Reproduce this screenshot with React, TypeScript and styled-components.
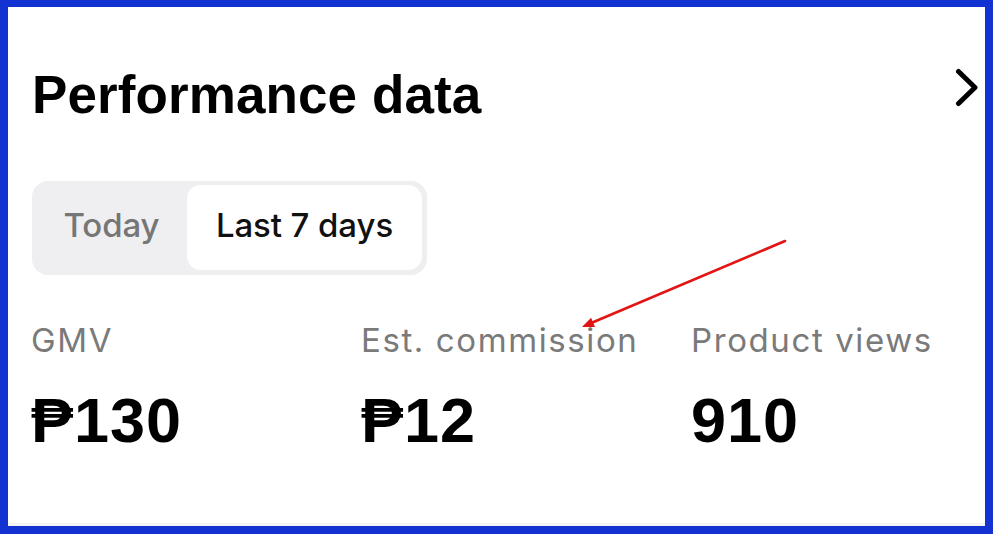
import React from "react";
import styled, { createGlobalStyle } from "styled-components";

const Global = createGlobalStyle`
  html, body { margin: 0; padding: 0; background: #ffffff; }
  * { box-sizing: border-box; }
`;

const Frame = styled.div`
  position: relative;
  width: 993px;
  height: 534px;
  border-style: solid;
  border-color: #1233d1;
  border-width: 7px 8px 8px 8px;
  background: #ffffff;
  box-shadow: inset 0 -3px 0 #f5f5f5;
  display: flex;
  flex-direction: column;
  padding: 58px 7px 0 23px;
  overflow: hidden;
`;

const Header = styled.div`
  display: flex;
  justify-content: space-between;
  align-items: flex-start;
`;

const Title = styled.h1`
  margin: 0 0 0 1px;
  font-family: "Liberation Sans", Arial, sans-serif;
  font-weight: 700;
  font-size: 53px;
  line-height: 60px;
  color: #000000;
  letter-spacing: 0.1px;
`;

const ChevronBox = styled.div`
  margin-top: 3px;
  width: 23px;
  height: 39px;
  display: flex;
`;

const Segmented = styled.div`
  margin-top: 56px;
  margin-left: 1px;
  align-self: flex-start;
  display: flex;
  padding: 4px 5px 5px 4px;
  background: #efeff1;
  border-radius: 16px;
  height: 94px;
`;

const Segment = styled.div<{ $active?: boolean; $w: number }>`
  width: ${(p) => p.$w}px;
  display: flex;
  align-items: center;
  justify-content: center;
  padding-bottom: 5px;
  border-radius: 14px;
  background: ${(p) => (p.$active ? "#ffffff" : "transparent")};
  color: ${(p) => (p.$active ? "#111111" : "#767676")};
  font-family: Inter, "Noto Sans", sans-serif;
  font-weight: 500;
  font-size: 33px;
  letter-spacing: -0.1px;
`;

const Stats = styled.div`
  margin-top: 45px;
  display: grid;
  grid-template-columns: 330px 330px 1fr;
`;

const Stat = styled.div`
  display: flex;
  flex-direction: column;
`;

const Label = styled.div`
  font-family: Inter, "Noto Sans", sans-serif;
  font-weight: 400;
  font-size: 33px;
  line-height: 40px;
  letter-spacing: 1.6px;
  color: #7a7a7a;
  white-space: nowrap;
`;

const Value = styled.div`
  margin-top: 25px;
  font-family: "Liberation Sans", "DejaVu Sans", sans-serif;
  font-weight: 700;
  font-size: 63px;
  line-height: 70px;
  letter-spacing: 1px;
  color: #000000;
  white-space: nowrap;
`;

const Annotation = styled.svg`
  position: absolute;
  left: 567px;
  top: 228px;
  width: 215px;
  height: 100px;
  pointer-events: none;
  overflow: visible;
`;

const Chevron = () => (
  <svg width="23" height="39" viewBox="0 0 23 39" fill="none">
    <polyline
      points="3.5,3.5 20,19.5 3.5,35.5"
      stroke="#000"
      strokeWidth="5"
      strokeLinecap="round"
      strokeLinejoin="round"
    />
  </svg>
);

const stats = [
  { label: "GMV", value: "₱130" },
  { label: "Est. commission", value: "₱12" },
  { label: "Product views", value: "910" },
];

export default function App() {
  return (
    <>
      <Global />
      <Frame>
        <Header>
          <Title>Performance data</Title>
          <ChevronBox>
            <Chevron />
          </ChevronBox>
        </Header>
        <Segmented>
          <Segment $w={151}>Today</Segment>
          <Segment $w={235} $active>
            Last 7 days
          </Segment>
        </Segmented>
        <Stats>
          {stats.map((s) => (
            <Stat key={s.label}>
              <Label>{s.label}</Label>
              <Value>{s.value}</Value>
            </Stat>
          ))}
        </Stats>
        <Annotation viewBox="575 235 215 100">
          <line x1="785" y1="241" x2="593" y2="322.3" stroke="#e31414" strokeWidth="2.6" strokeLinecap="round" />
          <polygon points="582,327 595,326.9 591.1,317.7" fill="#e31414" />
        </Annotation>
      </Frame>
    </>
  );
}
